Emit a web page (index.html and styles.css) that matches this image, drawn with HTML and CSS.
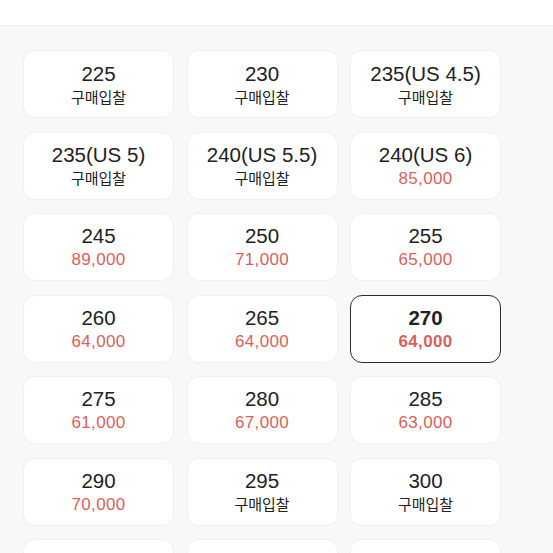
FILE: index.html
```html
<!DOCTYPE html>
<html lang="ko">
<head>
<meta charset="utf-8">
<title>사이즈 선택</title>
<link rel="stylesheet" href="styles.css">
</head>
<body>

<div class="top-bar"></div>

<div class="size-list">
  <div class="size-card"><div class="size">225</div><div class="bid">구매입찰</div></div>
  <div class="size-card"><div class="size">230</div><div class="bid">구매입찰</div></div>
  <div class="size-card"><div class="size">235(US 4.5)</div><div class="bid">구매입찰</div></div>

  <div class="size-card"><div class="size">235(US 5)</div><div class="bid">구매입찰</div></div>
  <div class="size-card"><div class="size">240(US 5.5)</div><div class="bid">구매입찰</div></div>
  <div class="size-card"><div class="size">240(US 6)</div><div class="price">85,000</div></div>

  <div class="size-card"><div class="size">245</div><div class="price">89,000</div></div>
  <div class="size-card"><div class="size">250</div><div class="price">71,000</div></div>
  <div class="size-card"><div class="size">255</div><div class="price">65,000</div></div>

  <div class="size-card"><div class="size">260</div><div class="price">64,000</div></div>
  <div class="size-card"><div class="size">265</div><div class="price">64,000</div></div>
  <div class="size-card selected"><div class="size">270</div><div class="price">64,000</div></div>

  <div class="size-card"><div class="size">275</div><div class="price">61,000</div></div>
  <div class="size-card"><div class="size">280</div><div class="price">67,000</div></div>
  <div class="size-card"><div class="size">285</div><div class="price">63,000</div></div>

  <div class="size-card"><div class="size">290</div><div class="price">70,000</div></div>
  <div class="size-card"><div class="size">295</div><div class="bid">구매입찰</div></div>
  <div class="size-card"><div class="size">300</div><div class="bid">구매입찰</div></div>

  <!-- next row, only its top edge is in view -->
  <div class="size-card"></div>
  <div class="size-card"></div>
  <div class="size-card"></div>
</div>

</body>
</html>
```

FILE: styles.css
```css
body {
  margin: 0;
  background-color: #f8f8f8;
  color: #222;
  font-family: "Liberation Sans", "Noto Sans CJK KR", sans-serif;
  overflow: hidden;
}

.top-bar {
  height: 25px;
  background-color: #fff;
  border-bottom: 1px solid #f0f0f0;
}

.size-list {
  display: grid;
  grid-template-columns: repeat(3, 151px);
  gap: 13.5px 12.5px;
  padding: 24px 0 0 23px;
}

.size-card {
  height: 68px;
  box-sizing: border-box;
  background-color: #fff;
  border: 1px solid #efefef;
  border-radius: 12px;
  display: flex;
  flex-direction: column;
  align-items: center;
  justify-content: center;
  text-align: center;
  padding-top: 1px;
}

.size {
  font-size: 20.5px;
  line-height: 24px;
}

.bid {
  font-size: 15px;
  line-height: 22px;
  font-family: "Noto Sans CJK KR", sans-serif;
}

.price {
  color: #da5f5b;
  font-size: 17px;
  line-height: 23px;
  letter-spacing: 0.3px;
}

.size-card.selected {
  border: 1.5px solid #2b2b2b;
}

.size-card.selected .size,
.size-card.selected .price {
  font-weight: bold;
}
```
